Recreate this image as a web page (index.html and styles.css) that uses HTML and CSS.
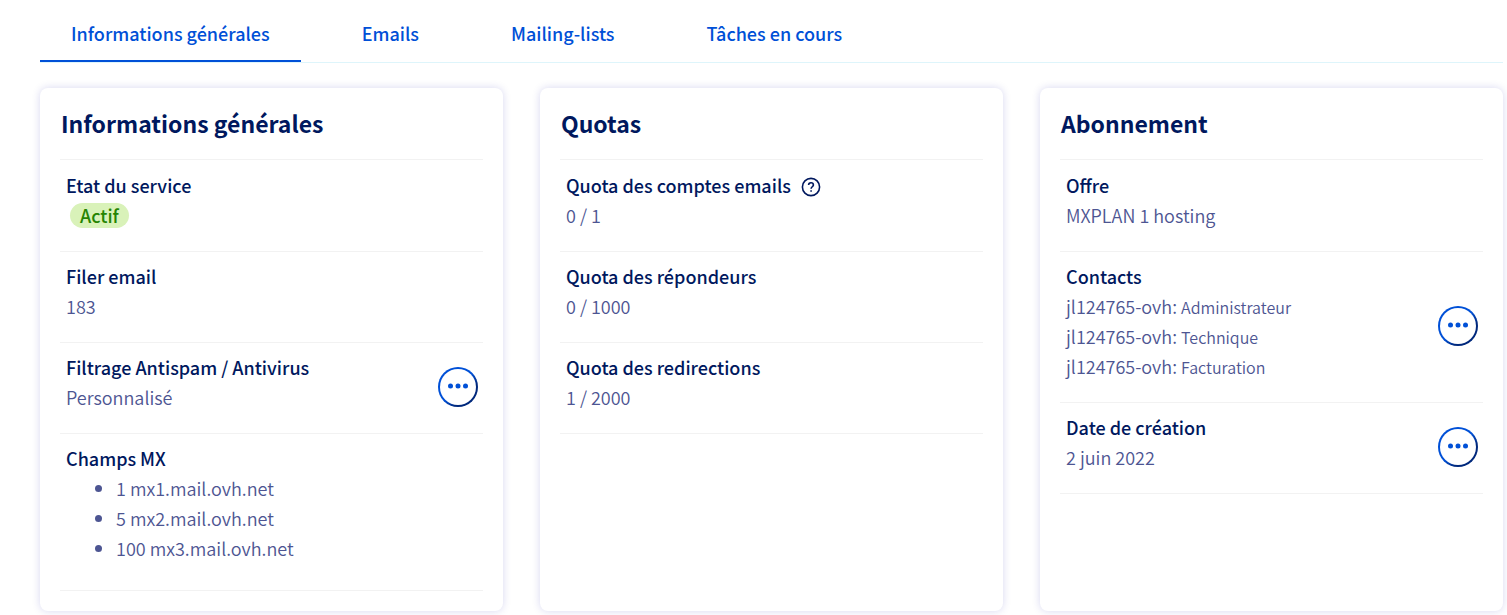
FILE: index.html
```html
<!DOCTYPE html>
<html lang="fr">
  <head>
    <meta charset="utf-8">
    <title>Emails - Informations générales</title>
    <link rel="stylesheet" href="styles.css">
  </head>
  <body>
    <nav class="tabs">
      <a class="tab active" href="#general">Informations générales</a>
      <a class="tab" href="#emails">Emails</a>
      <a class="tab" href="#mailing-lists">Mailing-lists</a>
      <a class="tab" href="#tasks">Tâches en cours</a>
    </nav>

    <main class="tiles">
      <section class="tile">
        <h2>Informations générales</h2>
        <div class="row">
          <dl>
            <dt>Etat du service</dt>
            <dd><span class="badge">Actif</span></dd>
          </dl>
        </div>
        <div class="row">
          <dl>
            <dt>Filer email</dt>
            <dd>183</dd>
          </dl>
        </div>
        <div class="row">
          <dl>
            <dt>Filtrage Antispam / Antivirus</dt>
            <dd>Personnalisé</dd>
          </dl>
          <button class="menu" type="button" aria-label="Actions">
            <svg width="20" height="6" viewBox="0 0 20 6"><circle cx="2.5" cy="3" r="2.5"/><circle cx="10" cy="3" r="2.5"/><circle cx="17.5" cy="3" r="2.5"/></svg>
          </button>
        </div>
        <div class="row">
          <dl>
            <dt>Champs MX</dt>
            <dd>
              <ul>
                <li>1 mx1.mail.ovh.net</li>
                <li>5 mx2.mail.ovh.net</li>
                <li>100 mx3.mail.ovh.net</li>
              </ul>
            </dd>
          </dl>
        </div>
      </section>

      <section class="tile">
        <h2>Quotas</h2>
        <div class="row">
          <dl>
            <dt>
              Quota des comptes emails
              <button class="help" type="button" aria-label="Aide">
                <svg width="20" height="20" viewBox="0 0 20 20"><circle cx="10" cy="10" r="8.6"/><path d="M7.6 8.1C7.6 6.6 8.6 5.7 10 5.7s2.4.9 2.4 2.2c0 1.8-2.3 1.9-2.3 3.8"/><path d="M10.1 13.2v1.6"/></svg>
              </button>
            </dt>
            <dd>0 / 1</dd>
          </dl>
        </div>
        <div class="row">
          <dl>
            <dt>Quota des répondeurs</dt>
            <dd>0 / 1000</dd>
          </dl>
        </div>
        <div class="row">
          <dl>
            <dt>Quota des redirections</dt>
            <dd>1 / 2000</dd>
          </dl>
        </div>
      </section>

      <section class="tile">
        <h2>Abonnement</h2>
        <div class="row">
          <dl>
            <dt>Offre</dt>
            <dd>MXPLAN 1 hosting</dd>
          </dl>
        </div>
        <div class="row">
          <dl>
            <dt>Contacts</dt>
            <dd>jl124765-ovh: <small>Administrateur</small></dd>
            <dd>jl124765-ovh: <small>Technique</small></dd>
            <dd>jl124765-ovh: <small>Facturation</small></dd>
          </dl>
          <button class="menu" type="button" aria-label="Actions">
            <svg width="20" height="6" viewBox="0 0 20 6"><circle cx="2.5" cy="3" r="2.5"/><circle cx="10" cy="3" r="2.5"/><circle cx="17.5" cy="3" r="2.5"/></svg>
          </button>
        </div>
        <div class="row">
          <dl>
            <dt>Date de création</dt>
            <dd>2 juin 2022</dd>
          </dl>
          <button class="menu" type="button" aria-label="Actions">
            <svg width="20" height="6" viewBox="0 0 20 6"><circle cx="2.5" cy="3" r="2.5"/><circle cx="10" cy="3" r="2.5"/><circle cx="17.5" cy="3" r="2.5"/></svg>
          </button>
        </div>
      </section>
    </main>
  </body>
</html>
```
FILE: styles.css
```css
* {box-sizing: border-box;}
body {
  margin: 0;
  padding: 0 4px 4px 40px;
  background: #fff;
  color: #4d5592;
  font: 350 18px/30px "Noto Sans CJK SC", "Open Sans", sans-serif;
}

.tabs {
  display: flex;
  gap: 30px;
  height: 63px;
  border-bottom: 1px solid #def5fb;
}
.tab {
  padding: 18px 31px 0;
  border-bottom: 2px solid transparent;
  color: #0050d7;
  font-weight: 500;
  text-decoration: none;
  white-space: nowrap;
}
.tab.active {border-color: #0050d7;}

.tiles {
  display: grid;
  grid-template-columns: repeat(3, 1fr);
  gap: 37px;
  margin-top: 25px;
}
.tile {
  padding: 0 20px 20px;
  border-radius: 8px;
  background: #fff;
  box-shadow: 0 0 8px rgba(0, 0, 160, 0.16);
}
.tile h2 {
  margin: 0 0 1px;
  padding: 20px 1px 21px;
  border-bottom: 1px solid #f2f2f2;
  color: #00185e;
  font-size: 23px;
  font-weight: 700;
  line-height: 30px;
}

.row {
  display: flex;
  align-items: center;
  justify-content: space-between;
  padding: 9px 5px 11px 6px;
  border-bottom: 1px solid #f2f2f2;
}
dl {margin: 0; padding-bottom: 10px;}
dt {
  display: flex;
  align-items: center;
  gap: 10px;
  color: #00185e;
  font-weight: 500;
}
dd {margin: 0;}
small {font-size: 16px; line-height: 1;}
ul {margin: 0 0 6px; padding-left: 50px;}

.badge {
  display: block;
  width: fit-content;
  margin: 3px 4px 2px;
  padding: 0 10px;
  border-radius: 13px;
  background: #d9f2b9;
  color: #268403;
  font-weight: 500;
  line-height: 25px;
}

.menu {
  display: flex;
  align-items: center;
  justify-content: center;
  width: 40px;
  height: 40px;
  padding: 0 0 2px;
  border: 2px solid transparent;
  border-radius: 50%;
  background: linear-gradient(#fff, #fff) padding-box, linear-gradient(135deg, #0050d7 50%, #00287c 70%) border-box;
  cursor: pointer;
}
.menu svg {fill: #0050d7;}

.help {
  display: flex;
  padding: 4px 0 0;
  border: 0;
  background: none;
}
.help svg {
  fill: none;
  stroke: #00185e;
  stroke-width: 1.6;
}
```
